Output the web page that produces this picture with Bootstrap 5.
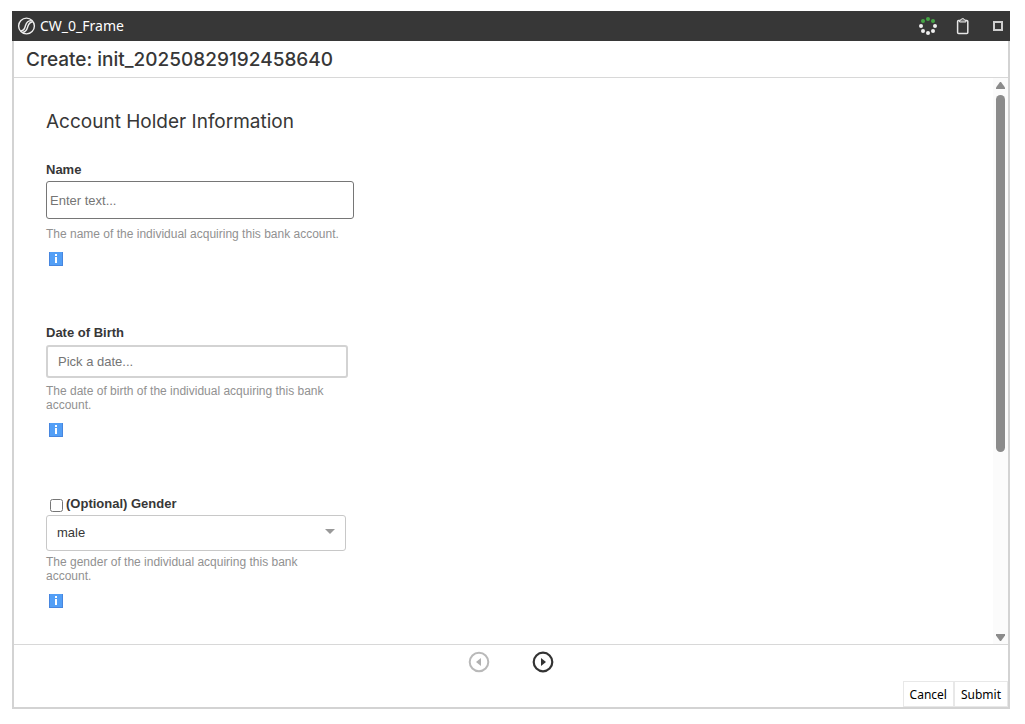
<!DOCTYPE html>
<html lang="en">
<head>
<meta charset="utf-8">
<meta name="viewport" content="width=device-width, initial-scale=1">
<title>CW_0_Frame</title>
<link href="https://cdn.jsdelivr.net/npm/bootstrap@5.3.0/dist/css/bootstrap.min.css" rel="stylesheet">
<style>
  body { font-family: "Liberation Sans", sans-serif; color: #373737; background: #fff; }
  .app-shell { padding: 11px 15px 15px 12px; }
  .title-strip { height: 30px; background: #373737; color: #fff; font: 14px/20px "Noto Sans", "Open Sans", sans-serif; padding: 0 7px 0 5px; }
  .icon-btn { border: 0; background: none; padding: 0; display: flex; }
  .tool-icons { gap: 17px; }
  .window-body { border: 2px solid #d3d3d3; border-top: 0; min-height: 0; }
  .page-title, .section-title { font-family: Inter, "Liberation Sans", sans-serif; font-size: 19px; }
  .page-title { line-height: 34px; font-weight: 500; padding: 2px 0 0 12px; border-bottom: 1px solid #d8d8d8; }
  .scroll-area { min-height: 0; }
  .form-area { padding: 32px 32px 0; overflow: hidden; }
  .section-title { line-height: 24px; font-weight: 400; margin-bottom: 27px; }
  .field { width: 308px; margin-bottom: 58px; }
  .field-label { display: block; font-size: 13px; line-height: 18px; font-weight: 700; margin-bottom: 2px; }
  .field input[type=text], .field select { font-size: 13px; line-height: 18px; color: #373737; border-radius: 3px; box-shadow: none; }
  .field input[type=text]::placeholder { color: #757575; opacity: 1; }
  .field .name-input { height: 38px; border: 1px solid #767676; border-radius: 2px; padding: 0 3px; margin-bottom: 8px; }
  .field .date-input { width: 302px; height: 33px; border: 2px solid #d3d3d3; padding: 0 10px; margin: 3px 0 6px; }
  .field .gender-select { width: 300px; height: 36px; border: 1px solid #c8c8c8; padding: 0 10px; margin-bottom: 4px;
    background: #fff url("data:image/svg+xml,%3Csvg xmlns='http://www.w3.org/2000/svg' width='10' height='5'%3E%3Cpath d='M0 0h10L5 5z' fill='%23999'/%3E%3C/svg%3E") no-repeat right 10px top 13px / 10px 5px; }
  .tick { width: 13px; height: 13px; margin: 0 3px 0 4px; }
  .help-text { width: 300px; font-size: 12px; line-height: 14px; color: #919191; margin-bottom: 11px; }
  .info-mark { width: 14px; height: 14px; margin-left: 3px; border: 0; padding: 0; display: block; background: none; }
  .info-mark svg { display: block; }
  .scroll-rail { width: 15px; background: #fbfbfb; padding: 4px 3px 3px; }
  .scroll-track { padding: 6px 0; }
  .scroll-thumb { width: 9px; height: 67%; border-radius: 5px; background: #8b8b8b; }
  .pager { border-top: 1px solid #d8d8d8; padding: 6px 0 8px; gap: 42px; }
  .action-btn { height: 26px; border: 1px solid #e8e8e8; background: #fff; color: #000; padding: 1px 6px 0; font: 12px/18px "Noto Sans", "Open Sans", sans-serif; }
</style>
</head>
<body>
<svg class="d-none">
  <defs>
    <symbol id="info" viewBox="0 0 14 14">
      <path d="M0 0h14v14H0z" fill="#4786df"/><path d="M1 0h12v13H1z" fill="#539ff6"/>
      <path d="M6 2h2v2H6zM6 5h2v6H6z" fill="#fff"/>
    </symbol>
  </defs>
</svg>
<div class="app-shell vh-100 d-flex flex-column">
  <header class="title-strip d-flex align-items-center flex-shrink-0">
    <svg width="19" height="18" viewBox="0 0 19 18" fill="none" stroke="#eee" stroke-width="1.400">
      <circle cx="9.500" cy="9" r="7.900"/><path d="M4 14C7.500 13.500 7.800 11 8.500 8.500 9.300 5.700 10.500 3.500 14.800 3.600"/><path d="M6 15.400c3.500-.6 4-3.300 4.900-6.100.8-2.500 1.700-4 4.800-4.500"/>
    </svg>
    <span class="ms-1 me-auto">CW_0_Frame</span>
    <div class="tool-icons d-flex align-items-center">
      <svg width="20" height="20" viewBox="0 0 20 20" fill="#eee" role="img" aria-label="Working">
        <g fill="#46a546"><circle cx="10" cy="3" r="2"/><circle cx="5" cy="5" r="2"/><circle cx="15" cy="5" r="2"/></g>
        <circle cx="3" cy="10" r="2"/><circle cx="17" cy="10" r="2"/><circle cx="5" cy="15" r="2"/><circle cx="15" cy="15" r="2"/><circle cx="10" cy="17" r="2"/>
      </svg>
      <button class="icon-btn" type="button" aria-label="Clipboard">
        <svg width="16" height="18" viewBox="0 0 16 18"><rect x="2.600" y="3.600" width="10.200" height="12.800" rx="1" fill="none" stroke="#e6e6e6" stroke-width="1.500"/><path d="M4.500 5V3.500l1.500-.6C6.300 1 9.100 1 9.400 2.900l1.500.6V5z" fill="#777" stroke="#e6e6e6"/></svg>
      </button>
      <button class="icon-btn" type="button" aria-label="Maximize">
        <svg width="15" height="10" viewBox="0 0 15 10"><path d="M6 1h8v8H6z" fill="none" stroke="#cfcfcf" stroke-width="2"/></svg>
      </button>
    </div>
  </header>
  <div class="window-body d-flex flex-column flex-grow-1">
    <h1 class="page-title mb-0 flex-shrink-0">Create: init_20250829192458640</h1>
    <div class="scroll-area d-flex flex-grow-1">
      <form class="form-area flex-grow-1" id="accountForm">
        <h2 class="section-title">Account Holder Information</h2>
        <div class="field">
          <label class="field-label" for="name">Name</label>
          <input class="form-control name-input" type="text" id="name" placeholder="Enter text...">
          <p class="help-text">The name of the individual acquiring this bank account.</p>
          <button class="info-mark" type="button" aria-label="About name"><svg width="14" height="14"><use href="#info"/></svg></button>
        </div>
        <div class="field">
          <label class="field-label" for="dob">Date of Birth</label>
          <input class="form-control date-input" type="text" id="dob" placeholder="Pick a date...">
          <p class="help-text">The date of birth of the individual acquiring this bank account.</p>
          <button class="info-mark" type="button" aria-label="About date of birth"><svg width="14" height="14"><use href="#info"/></svg></button>
        </div>
        <div class="field mb-0">
          <div class="d-flex align-items-center">
            <input class="tick" type="checkbox" id="useGender">
            <label class="field-label" for="useGender">(Optional) Gender</label>
          </div>
          <select class="form-select gender-select" aria-label="Gender"><option>male</option><option>female</option></select>
          <p class="help-text">The gender of the individual acquiring this bank account.</p>
          <button class="info-mark" type="button" aria-label="About gender"><svg width="14" height="14"><use href="#info"/></svg></button>
        </div>
      </form>
      <div class="scroll-rail d-flex flex-column flex-shrink-0" aria-hidden="true">
        <svg class="flex-shrink-0" width="9" height="7" viewBox="0 0 9 7" fill="#8b8b8b"><path d="M4 0h1l4 5.500V7H0V5.500z"/></svg>
        <div class="scroll-track flex-grow-1"><div class="scroll-thumb"></div></div>
        <svg class="flex-shrink-0" width="9" height="7" viewBox="0 0 9 7" fill="#8b8b8b"><path d="M4 7h1l4-5.500V0H0v1.500z"/></svg>
      </div>
    </div>
    <footer class="flex-shrink-0">
      <div class="pager d-flex justify-content-center">
        <button class="icon-btn" type="button" aria-label="Previous" disabled>
          <svg width="22" height="22" viewBox="0 0 22 22"><circle cx="11" cy="11" r="9.300" fill="none" stroke="#b9b9b9" stroke-width="2"/><path d="M13 7v8l-5-4z" fill="#b0b0b0"/></svg>
        </button>
        <button class="icon-btn" type="button" aria-label="Next">
          <svg width="22" height="22" viewBox="0 0 22 22"><circle cx="11" cy="11" r="9.300" fill="none" stroke="#333" stroke-width="2.200"/><path d="M9 7v8l5-4z" fill="#333"/></svg>
        </button>
      </div>
      <div class="d-flex justify-content-end">
        <button class="action-btn" type="button">Cancel</button>
        <button class="action-btn" type="submit" form="accountForm">Submit</button>
      </div>
    </footer>
  </div>
</div>
<script src="https://cdn.jsdelivr.net/npm/bootstrap@5.3.0/dist/js/bootstrap.bundle.min.js"></script>
</body>
</html>
